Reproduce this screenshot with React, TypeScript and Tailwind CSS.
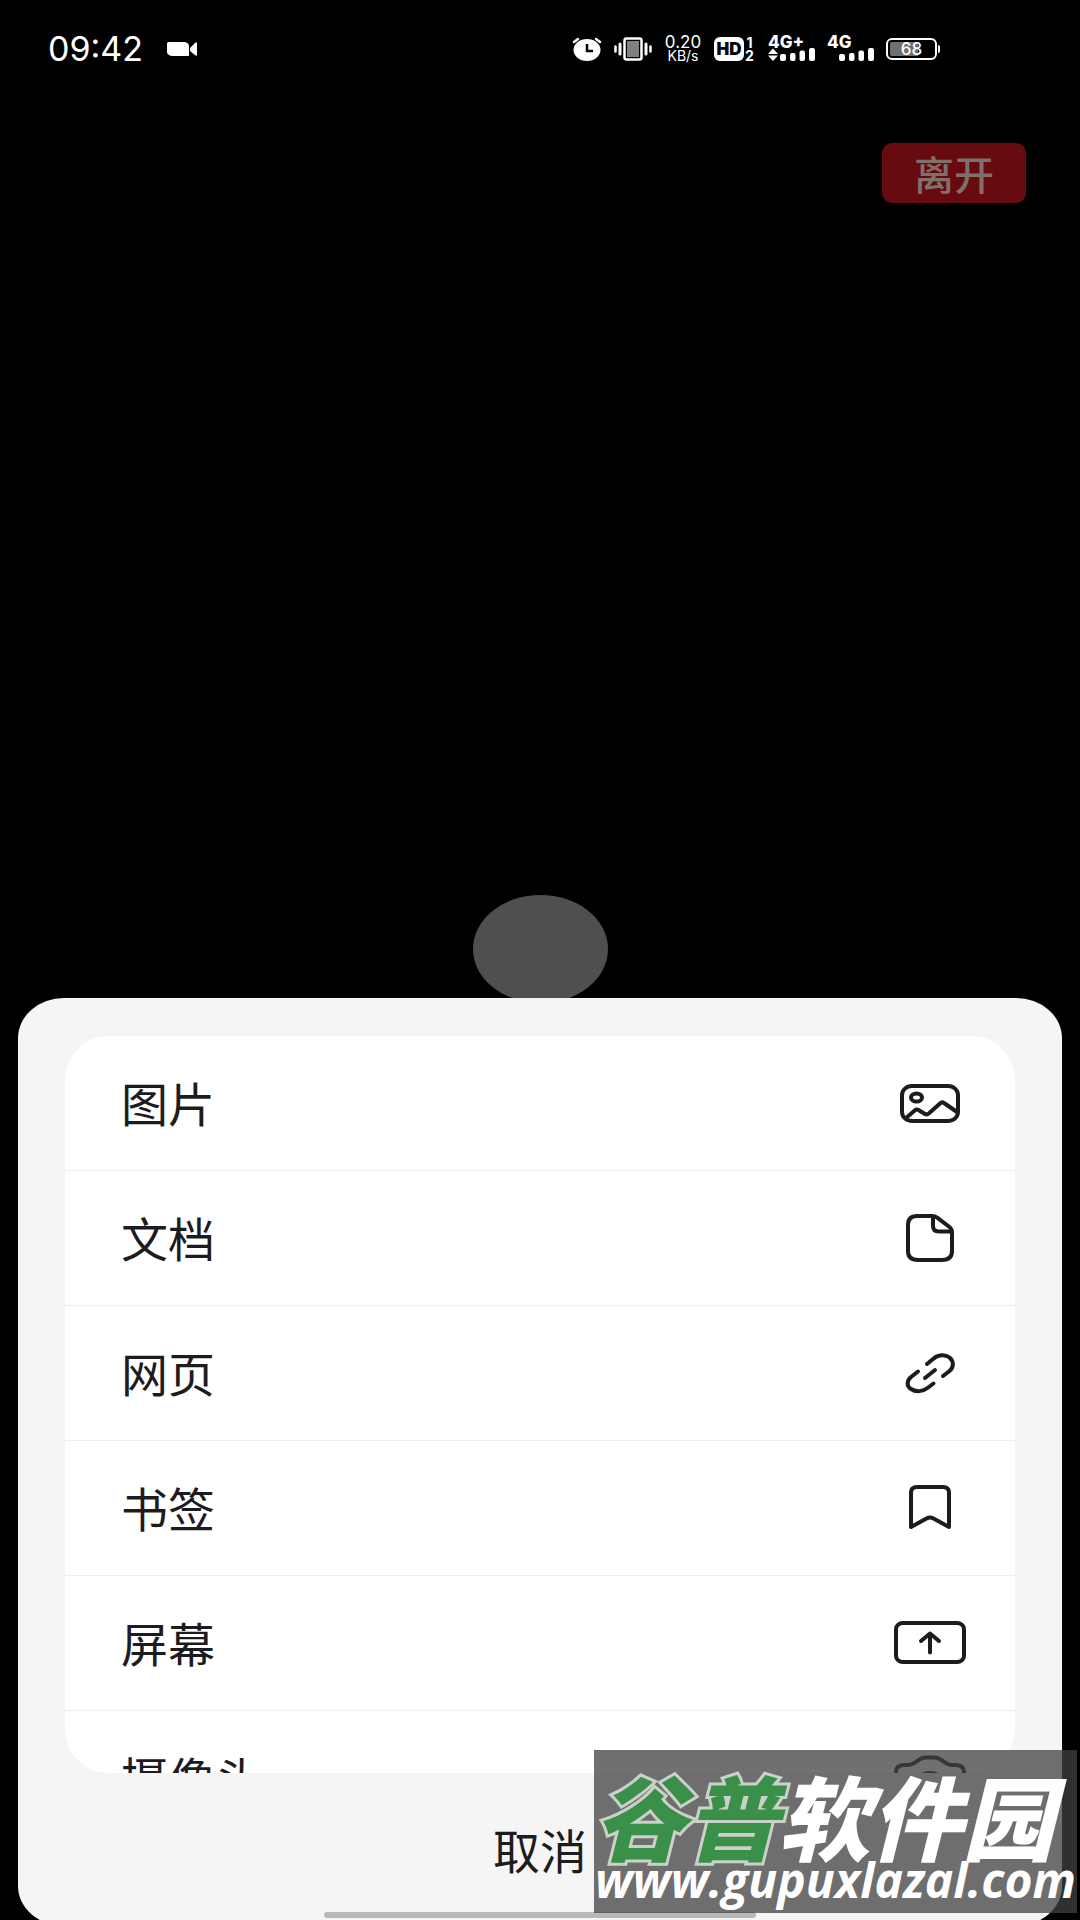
import React from 'react';

interface ShareOption {
  id: string;
  label: string;
  icon: React.ReactNode;
}

// Every option icon shares the same 72x60 box so they line up on one axis
function OptionIcon({ children }: { children: React.ReactNode }) {
  return (
    <svg
      viewBox="0 0 72 60"
      className="h-[60px] w-[72px] shrink-0"
      fill="none"
      stroke="currentColor"
      strokeWidth={4}
      strokeLinecap="round"
      strokeLinejoin="round"
      aria-hidden="true"
    >
      {children}
    </svg>
  );
}

const SHARE_OPTIONS: ShareOption[] = [
  {
    id: 'image',
    label: '图片',
    icon: (
      <OptionIcon>
        <rect x="8" y="13" width="56" height="35" rx="10" ry="9" />
        <ellipse cx="22.500" cy="24.500" rx="5.500" ry="4" />
        <path d="M12 45 L21 37.200 Q22.500 35.800 24.500 37 L31 41 Q33 42 35 40.300 L46 30.500 Q48 28.500 50 30 L63 39" />
      </OptionIcon>
    ),
  },
  {
    id: 'document',
    label: '文档',
    icon: (
      <OptionIcon>
        <path d="M23 8 H38 Q41 8 43.500 9.800 L55.500 19 Q58 21 58 24 V43 Q58 52 48 52 H24 Q14 52 14 43 V17 Q14 8 23 8 Z" />
        <path d="M39 9 V18 Q39 23.500 45 23.500 H57" />
      </OptionIcon>
    ),
  },
  {
    id: 'link',
    label: '网页',
    icon: (
      <OptionIcon>
        <path d="M33 21 L39 16 C44 11.500 51 11 55.500 14.500 C60 18.500 60 24 55.500 28 L49 33" />
        <path d="M24 28.500 L17 34 C12.500 38 12.500 43 17 46 C22 49.500 29 48.500 33.500 45 L39.500 40.500" />
        <path d="M31 35 L41 27" />
      </OptionIcon>
    ),
  },
  {
    id: 'bookmark',
    label: '书签',
    icon: (
      <OptionIcon>
        <path d="M23 9 H49 Q55 9 55 14.500 V49 L39.500 40.500 Q36 38.500 32.500 40.500 L17 49 V14.500 Q17 9 23 9 Z" />
      </OptionIcon>
    ),
  },
  {
    id: 'screen',
    label: '屏幕',
    icon: (
      <OptionIcon>
        <rect x="2" y="10" width="68" height="39" rx="7" ry="6" />
        <path d="M36 39.500 V20.500 M27 28 L36 20.500 L45 28" />
      </OptionIcon>
    ),
  },
  {
    id: 'camera',
    label: '摄像头',
    icon: (
      <OptionIcon>
        <path d="M2 26 V24 Q2 17 11 17 H14 Q18 17 21 14.500 L25.500 11.500 Q28 9.500 32 9.500 H40 Q44 9.500 46.500 11.500 L51 14.500 Q54 17 58 17 H61 Q70 17 70 24 V45 Q70 52 61 52 H11 Q2 52 2 45 Z" />
        <ellipse cx="36" cy="34" rx="13" ry="9" />
      </OptionIcon>
    ),
  },
];

function SignalBars({ label, arrows }: { label: string; arrows?: boolean }) {
  return (
    <div className="flex w-[47px] flex-col">
      <span className="text-[17px] leading-[11px] font-extrabold">{label}</span>
      <svg viewBox="0 0 47 13" className="h-[13px] w-[47px]" fill="currentColor" aria-hidden="true">
        {arrows && <path d="M0 6 L5 0.500 L10 6 Z M0 7.500 L5 13 L10 7.500 Z" />}
        <rect x="12" y="6" width="6" height="7" rx="2" />
        <rect x="22" y="5" width="5.500" height="8" rx="2" />
        <rect x="31.500" y="2.500" width="5.500" height="10.500" rx="2" />
        <rect x="41" y="0" width="6" height="13" rx="2" />
      </svg>
    </div>
  );
}

function StatusBar() {
  return (
    <header className="flex h-[98px] items-center pr-[140px] pl-12 font-[Inter,sans-serif] text-white">
      <time className="text-[34px] leading-8">09:42</time>
      <svg viewBox="0 0 30 14" className="ml-6 h-[14px] w-[30px]" fill="currentColor" aria-hidden="true">
        <path d="M1.500 0 H18 Q22 1 22 4 V14 H5 Q0 13 0 10 V1.500 Q0 0 1.500 0 Z" />
        <path d="M23 6 L28.500 0.500 H30 V13.500 H28.500 L23 9 Z" />
      </svg>

      <div className="ml-auto flex items-center gap-3">
        <svg viewBox="0 0 30 24" className="h-6 w-[30px]" aria-hidden="true">
          <ellipse cx="15" cy="13" rx="13.500" ry="11" fill="currentColor" />
          <path d="M2 5 L6 2 M28 5 L24 2" stroke="currentColor" strokeWidth="2.500" strokeLinecap="round" />
          <path d="M15 7 V14 H21" fill="none" stroke="#000" strokeWidth="2.500" />
        </svg>
        <svg viewBox="0 0 38 24" className="h-6 w-[38px]" fill="none" stroke="currentColor" aria-hidden="true">
          <rect x="10.500" y="1.500" width="17" height="21" rx="2" strokeWidth="2.500" />
          <rect x="13" y="4" width="12" height="16" fill="#808080" stroke="none" />
          <path d="M6 7 V17 M32 7 V17" strokeWidth="3" strokeLinecap="round" />
          <path d="M1.500 9.500 V14.500 M36.500 9.500 V14.500" strokeWidth="2.500" strokeLinecap="round" />
        </svg>
        <div className="flex w-[38px] flex-col items-center">
          <span className="text-[17px] leading-[13px]">0.20</span>
          <span className="text-[14px] leading-[13px]">KB/s</span>
        </div>
        <div className="flex w-[42px] items-center gap-px">
          <span className="flex h-6 w-[30px] shrink-0 items-center justify-center rounded-md bg-white text-[17px] leading-4 font-black text-black">
            HD
          </span>
          <span className="flex flex-col items-center text-[14px] leading-[13px] font-bold">
            <span>1</span>
            <span>2</span>
          </span>
        </div>
        <SignalBars label="4G+" arrows />
        <SignalBars label="4G" />
        <div className="flex items-center gap-px">
          <div className="flex h-[22px] w-[51px] rounded-md border-2 border-white p-0.5">
            <div className="flex h-full w-full items-center justify-center rounded-xs bg-linear-to-r from-[#707070] from-65% to-black to-65% text-[17px] leading-4 font-medium">
              68
            </div>
          </div>
          <div className="h-2 w-0.5 rounded-r-sm bg-white" />
        </div>
      </div>
    </header>
  );
}

function Watermark() {
  return (
    <div className="absolute right-[3px] bottom-[7px] h-[163px] w-[483px] overflow-hidden bg-[#404040]/75 text-white italic">
      <div className="mt-5 flex font-['Noto_Sans_CJK_SC',sans-serif] text-[92px] leading-[88px] font-black">
        <span className="text-[#3a9048] [-webkit-text-stroke:6px_#c9d2c9] [paint-order:stroke_fill]">谷普</span>
        <span>软件园</span>
      </div>
      <div className="text-center font-['Open_Sans',sans-serif] text-[48px] leading-[44px] font-bold">
        www.gupuxlazal.com
      </div>
    </div>
  );
}

export default function App() {
  return (
    <div className="relative flex h-screen flex-col overflow-hidden bg-black font-['Noto_Sans_CJK_SC',sans-serif]">
      <StatusBar />

      <div className="flex justify-end pt-[45px] pr-[54px]">
        <button
          type="button"
          className="h-[60px] w-[144px] rounded-[10px] bg-[#680b10] text-[40px] leading-[60px] font-medium text-[#80706c]"
        >
          离开
        </button>
      </div>

      <div className="mt-auto -mb-[5px] h-[108px] w-[135px] shrink-0 self-center rounded-[50%] bg-[#4f4f4f]" />

      <section className="relative mx-[18px] -mb-[6px] shrink-0 rounded-[46px/40px] bg-[#f5f5f5] pt-[38px] text-[#1c1c20]">
        <ul className="mx-[47px] h-[737px] overflow-hidden rounded-[44px] bg-white">
          {SHARE_OPTIONS.map((option) => (
            <li key={option.id} className="border-b border-[#ededed]">
              <button
                type="button"
                className="flex h-[134px] w-full items-center justify-between pr-[49px] pl-14 text-[47px] leading-[60px]"
              >
                <span className="pb-0.5">{option.label}</span>
                {option.icon}
              </button>
            </li>
          ))}
        </ul>
        <button type="button" className="h-[153px] w-full pb-0.5 text-[47px] leading-[60px]">
          取消
        </button>
        {/* system gesture bar */}
        <div className="absolute bottom-2 left-1/2 h-[6px] w-[432px] -translate-x-1/2 rounded-full bg-[#b8b8b8]" />
      </section>

      <Watermark />
    </div>
  );
}
